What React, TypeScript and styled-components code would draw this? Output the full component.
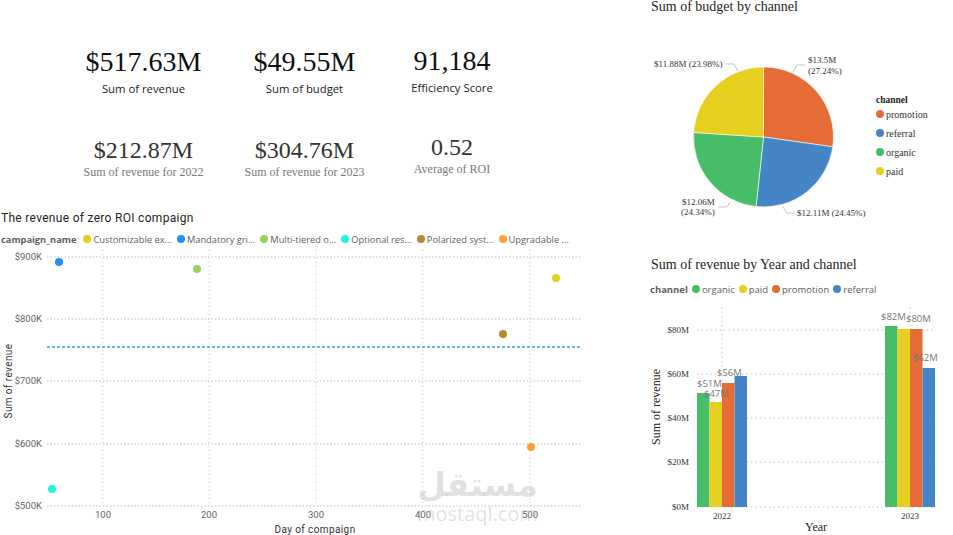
import React from 'react'
import styled, { createGlobalStyle } from 'styled-components'

const GlobalStyle = createGlobalStyle`
  html, body {
    margin: 0;
    padding: 0;
    background: #ffffff;
  }
`

const Page = styled.div`
  position: relative;
  width: 953px;
  height: 535px;
  overflow: hidden;
  display: grid;
  grid-template-columns: 630px 323px;
  background: #ffffff;
`

const LeftColumn = styled.div`
  display: flex;
  flex-direction: column;
`

const RightColumn = styled.div`
  display: flex;
  flex-direction: column;
`

const KpiGrid = styled.div`
  display: grid;
  grid-template-columns: 161px 161px 134px;
  grid-template-rows: 91px 70px;
  padding: 45px 0 0 63px;
  height: 165px;
  box-sizing: border-box;
`

const Kpi = styled.div<{ $lift?: number }>`
  display: flex;
  flex-direction: column;
  align-items: center;
  margin-top: ${p => -(p.$lift ?? 0)}px;
`

const KpiValue = styled.div<{ $small?: boolean }>`
  font-family: 'Liberation Serif', serif;
  font-size: ${p => (p.$small ? '24px' : '28px')};
  line-height: ${p => (p.$small ? '28px' : '34px')};
  color: ${p => (p.$small ? '#333333' : '#111111')};
  white-space: nowrap;
`

const KpiLabel = styled.div`
  font-family: 'Open Sans', sans-serif;
  font-size: 11.3px;
  line-height: 16px;
  margin-top: 2px;
  color: #222222;
  white-space: nowrap;
`

const KpiSubLabel = styled.div`
  font-family: 'Liberation Serif', serif;
  font-size: 12px;
  line-height: 16px;
  color: #777777;
  white-space: nowrap;
`

const ScatterSection = styled.section`
  position: relative;
  display: flex;
  flex-direction: column;
  padding: 46px 0 0 1px;
`

const ScatterTitle = styled.h2`
  margin: 0;
  font-family: 'Roboto', sans-serif;
  font-size: 12px;
  line-height: 14px;
  font-weight: 400;
  letter-spacing: 0.3px;
  color: #252423;
  white-space: nowrap;
`

const Legend = styled.div<{ $gap: number; $top: number }>`
  display: flex;
  align-items: center;
  gap: ${p => p.$gap}px;
  margin-top: ${p => p.$top}px;
  height: 14px;
  white-space: nowrap;
`

const LegendName = styled.span<{ $size: number; $after?: number }>`
  font-family: 'Open Sans', sans-serif;
  font-size: ${p => p.$size}px;
  font-weight: 700;
  color: #605e5c;
  margin-right: ${p => p.$after ?? 0}px;
`

const LegendItem = styled.span<{ $size: number }>`
  display: inline-flex;
  align-items: center;
  gap: 2px;
  font-family: 'Open Sans', sans-serif;
  font-size: ${p => p.$size}px;
  color: #605e5c;
`

const Dot = styled.i<{ $color: string; $size?: number }>`
  display: inline-block;
  flex: none;
  width: ${p => p.$size ?? 8}px;
  height: ${p => p.$size ?? 8}px;
  border-radius: 50%;
  background: ${p => p.$color};
`

const ChartSvg = styled.svg`
  display: block;
  flex: none;
`

const ChartWrap = styled.div`
  margin: 4px 0 0 -1px;
`

const BarWrap = styled.div`
  margin-top: 1px;
`

const AxisText = styled.text`
  font-family: 'Roboto', sans-serif;
  font-size: 9.5px;
  fill: #666666;
`

const AxisTitle = styled.text`
  font-family: 'Roboto', sans-serif;
  font-size: 10px;
  letter-spacing: 0.4px;
  fill: #333333;
`

const SerifTick = styled.text`
  font-family: 'Liberation Serif', serif;
  font-size: 9px;
  fill: #333333;
`

const SerifAxisTitle = styled.text`
  font-family: 'Liberation Serif', serif;
  font-size: 12px;
  fill: #252423;
`

const BarValue = styled.text`
  font-family: 'Open Sans', sans-serif;
  font-size: 9.5px;
  fill: #777777;
`

const PieLabel = styled.text`
  font-family: 'Liberation Serif', serif;
  font-size: 9px;
  fill: #333333;
`

const SerifTitle = styled.h2<{ $top: number }>`
  margin: ${p => p.$top}px 0 0 21px;
  font-family: 'Liberation Serif', serif;
  font-size: 14px;
  line-height: 16px;
  font-weight: 400;
  color: #252423;
  white-space: nowrap;
`

const PieRow = styled.div`
  display: flex;
  height: 200px;
  margin-top: 5px;
`

const PieLegend = styled.div`
  display: flex;
  flex-direction: column;
  gap: 5px;
  padding-top: 74px;
`

const PieLegendTitle = styled.div`
  font-family: 'Liberation Serif', serif;
  font-size: 9.5px;
  line-height: 12px;
  font-weight: 700;
  color: #252423;
  margin-bottom: -4px;
`

const PieLegendItem = styled.div`
  display: flex;
  align-items: center;
  gap: 2px;
  height: 14px;
  font-family: 'Liberation Serif', serif;
  font-size: 10px;
  color: #333333;
`

const BarLegendRow = styled.div`
  margin-left: 20px;
`

const Watermark = styled.div`
  position: absolute;
  left: 415px;
  top: 465px;
  width: 125px;
  display: flex;
  flex-direction: column;
  align-items: center;
  color: rgba(170, 170, 170, 0.35);
  pointer-events: none;
`

const WatermarkArabic = styled.div`
  font-family: 'DejaVu Sans', sans-serif;
  font-size: 33px;
  line-height: 40px;
  font-weight: 700;
`

const WatermarkLatin = styled.div`
  font-family: 'Open Sans', sans-serif;
  font-size: 20px;
  line-height: 20px;
  margin-top: -1px;
`

const colors = {
  organic: '#47bd68',
  paid: '#e6cf1e',
  promotion: '#e66c37',
  referral: '#4585c5',
}

const campaigns = [
  { name: 'Customizable ex...', color: '#e6cf1e', x: 556, y: 28 },
  { name: 'Mandatory gri...', color: '#2490f5', x: 59, y: 12 },
  { name: 'Multi-tiered o...', color: '#9bd25e', x: 197, y: 19 },
  { name: 'Optional res...', color: '#1ff5dc', x: 52, y: 239 },
  { name: 'Polarized syst...', color: '#b5892c', x: 503, y: 84 },
  { name: 'Upgradable ...', color: '#fca135', x: 531, y: 197 },
]

const scatterY = [
  { label: '$900K', y: 7 },
  { label: '$800K', y: 69 },
  { label: '$700K', y: 131 },
  { label: '$600K', y: 194 },
  { label: '$500K', y: 256 },
]

const scatterX = [
  { label: '100', x: 103 },
  { label: '200', x: 209 },
  { label: '300', x: 316 },
  { label: '400', x: 423 },
  { label: '500', x: 530 },
]

const ScatterChart = () => (
  <ChartSvg width={629} height={285} viewBox="0 0 629 285">
    {scatterX.map(t => (
      <g key={t.label}>
        <line x1={t.x} x2={t.x} y1={0} y2={256} stroke="#c8c8c8" strokeWidth={1} strokeDasharray="1 3" />
        <AxisText x={t.x} y={268} textAnchor="middle">{t.label}</AxisText>
      </g>
    ))}
    {scatterY.map(t => (
      <g key={t.label}>
        <line x1={47} x2={582} y1={t.y} y2={t.y} stroke="#bdbdbd" strokeWidth={1} strokeDasharray="1.5 2" />
        <AxisText x={42} y={t.y + 3} textAnchor="end">{t.label}</AxisText>
      </g>
    ))}
    <line x1={47} x2={582} y1={97} y2={97} stroke="#6ab2f5" strokeWidth={2} strokeDasharray="3 2" />
    {campaigns.map(c => (
      <circle key={c.name} cx={c.x} cy={c.y} r={4} fill={c.color} />
    ))}
    <AxisTitle transform="translate(12 131) rotate(-90)" textAnchor="middle">Sum of revenue</AxisTitle>
    <AxisTitle x={315} y={283} textAnchor="middle">Day of compaign</AxisTitle>
  </ChartSvg>
)

const pieSlices = [
  { name: 'promotion', color: colors.promotion, share: 27.24 },
  { name: 'referral', color: colors.referral, share: 24.45 },
  { name: 'organic', color: colors.organic, share: 24.34 },
  { name: 'paid', color: colors.paid, share: 23.98 },
]

const PIE_CX = 133.5
const PIE_CY = 117
const PIE_R = 70

function slicePath(from: number, to: number) {
  const point = (share: number) => {
    const a = (share / 100) * Math.PI * 2
    return [PIE_CX + PIE_R * Math.sin(a), PIE_CY - PIE_R * Math.cos(a)]
  }
  const [x1, y1] = point(from)
  const [x2, y2] = point(to)
  return `M${PIE_CX} ${PIE_CY}L${x1} ${y1}A${PIE_R} ${PIE_R} 0 0 1 ${x2} ${y2}Z`
}

const PieChart = () => {
  let start = 0
  return (
    <ChartSvg width={246} height={200} viewBox="0 0 246 200">
      {pieSlices.map(s => {
        const d = slicePath(start, start + s.share)
        start += s.share
        return <path key={s.name} d={d} fill={s.color} stroke="#ffffff" strokeWidth={0.6} />
      })}
      <path d="M163 52L167 45H175" fill="none" stroke="#c4c4c4" />
      <path d="M108 51L104 44H96" fill="none" stroke="#c4c4c4" />
      <path d="M100 182L97 187H88" fill="none" stroke="#c4c4c4" />
      <path d="M153 187L157 193H165" fill="none" stroke="#c4c4c4" />
      <PieLabel x={178} y={43}>$13.5M</PieLabel>
      <PieLabel x={178} y={54}>(27.24%)</PieLabel>
      <PieLabel x={24} y={47}>$11.88M (23.98%)</PieLabel>
      <PieLabel x={52} y={185}>$12.06M</PieLabel>
      <PieLabel x={51} y={195}>(24.34%)</PieLabel>
      <PieLabel x={167} y={196}>$12.11M (24.45%)</PieLabel>
    </ChartSvg>
  )
}

const barGroups = [
  {
    x: 67,
    bars: [
      { color: colors.organic, top: 393 },
      { color: colors.paid, top: 402 },
      { color: colors.promotion, top: 383 },
      { color: colors.referral, top: 376 },
    ],
  },
  {
    x: 255,
    bars: [
      { color: colors.organic, top: 326 },
      { color: colors.paid, top: 329 },
      { color: colors.promotion, top: 329 },
      { color: colors.referral, top: 368 },
    ],
  },
]

const barValues = [
  { label: '$51M', x: 67, y: 387 },
  { label: '$47M', x: 74, y: 397 },
  { label: '$56M', x: 87, y: 376 },
  { label: '$82M', x: 251, y: 320 },
  { label: '$80M', x: 276, y: 322 },
  { label: '$62M', x: 283, y: 361 },
]

const barTicks = [
  { label: '$80M', y: 330 },
  { label: '$60M', y: 374 },
  { label: '$40M', y: 418 },
  { label: '$20M', y: 462 },
  { label: '$0M', y: 507 },
]

// bar chart coordinates below use page y, the svg is shifted by BAR_TOP
const BAR_TOP = 297

const BarChart = () => (
  <ChartSvg width={323} height={238} viewBox={`0 ${BAR_TOP} 323 238`}>
    {barTicks.map(t => (
      <g key={t.label}>
        <line x1={67} x2={306} y1={t.y} y2={t.y} stroke="#c4c4c4" strokeDasharray="1.5 3" />
        <SerifTick x={59} y={t.y + 3} textAnchor="end">{t.label}</SerifTick>
      </g>
    ))}
    <line x1={92} x2={92} y1={307} y2={507} stroke="#cfcfcf" strokeDasharray="1.5 3" />
    <line x1={280} x2={280} y1={307} y2={507} stroke="#cfcfcf" strokeDasharray="1.5 3" />
    {barGroups.map(g =>
      g.bars.map((b, i) => (
        <rect key={`${g.x}-${i}`} x={g.x + i * 12.5} y={b.top} width={12.5} height={507 - b.top} fill={b.color} />
      )),
    )}
    {barValues.map(v => (
      <BarValue key={v.label} x={v.x} y={v.y}>{v.label}</BarValue>
    ))}
    <SerifTick x={92} y={519} textAnchor="middle">2022</SerifTick>
    <SerifTick x={280} y={519} textAnchor="middle">2023</SerifTick>
    <SerifAxisTitle transform="translate(30 407) rotate(-90)" textAnchor="middle">Sum of revenue</SerifAxisTitle>
    <SerifAxisTitle x={186} y={531} textAnchor="middle">Year</SerifAxisTitle>
  </ChartSvg>
)

export default function App() {
  return (
    <Page>
      <GlobalStyle />
      <LeftColumn>
        <KpiGrid>
          <Kpi>
            <KpiValue>$517.63M</KpiValue>
            <KpiLabel>Sum of revenue</KpiLabel>
          </Kpi>
          <Kpi>
            <KpiValue>$49.55M</KpiValue>
            <KpiLabel>Sum of budget</KpiLabel>
          </Kpi>
          <Kpi $lift={1}>
            <KpiValue>91,184</KpiValue>
            <KpiLabel>Efficiency Score</KpiLabel>
          </Kpi>
          <Kpi>
            <KpiValue $small>$212.87M</KpiValue>
            <KpiSubLabel>Sum of revenue for 2022</KpiSubLabel>
          </Kpi>
          <Kpi>
            <KpiValue $small>$304.76M</KpiValue>
            <KpiSubLabel>Sum of revenue for 2023</KpiSubLabel>
          </Kpi>
          <Kpi $lift={3}>
            <KpiValue $small>0.52</KpiValue>
            <KpiSubLabel>Average of ROI</KpiSubLabel>
          </Kpi>
        </KpiGrid>
        <ScatterSection>
          <ScatterTitle>The revenue of zero ROI compaign</ScatterTitle>
          <Legend $gap={5} $top={7}>
            <LegendName $size={9.3} $after={2}>campaign_name</LegendName>
            {campaigns.map(c => (
              <LegendItem key={c.name} $size={9.3}>
                <Dot $color={c.color} />
                {c.name}
              </LegendItem>
            ))}
          </Legend>
          <ChartWrap>
            <ScatterChart />
          </ChartWrap>
        </ScatterSection>
      </LeftColumn>
      <RightColumn>
        <SerifTitle $top={-1}>Sum of budget by channel</SerifTitle>
        <PieRow>
          <PieChart />
          <PieLegend>
            <PieLegendTitle>channel</PieLegendTitle>
            {pieSlices.map(s => (
              <PieLegendItem key={s.name}>
                <Dot $color={s.color} />
                {s.name}
              </PieLegendItem>
            ))}
          </PieLegend>
        </PieRow>
        <SerifTitle $top={37}>Sum of revenue by Year and channel</SerifTitle>
        <BarLegendRow>
          <Legend $gap={4} $top={9}>
            <LegendName $size={9.5}>channel</LegendName>
            <LegendItem $size={9.5}><Dot $color={colors.organic} />organic</LegendItem>
            <LegendItem $size={9.5}><Dot $color={colors.paid} />paid</LegendItem>
            <LegendItem $size={9.5}><Dot $color={colors.promotion} />promotion</LegendItem>
            <LegendItem $size={9.5}><Dot $color={colors.referral} />referral</LegendItem>
          </Legend>
        </BarLegendRow>
        <BarWrap>
          <BarChart />
        </BarWrap>
      </RightColumn>
      <Watermark>
        <WatermarkArabic>مستقل</WatermarkArabic>
        <WatermarkLatin>mostaql.com</WatermarkLatin>
      </Watermark>
    </Page>
  )
}
